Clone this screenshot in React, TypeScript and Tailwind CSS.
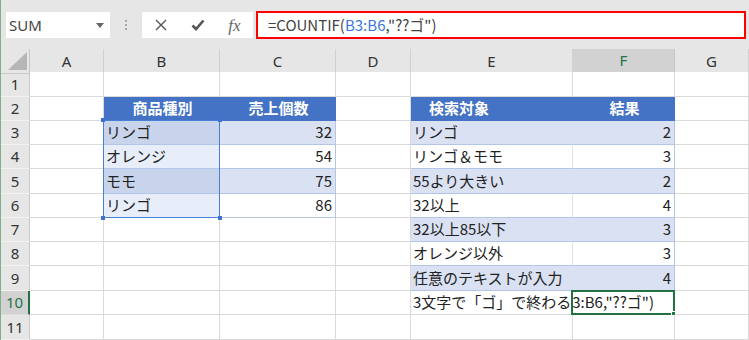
import { ReactNode } from 'react'

const font = "font-['Noto_Sans','Noto_Sans_CJK_JP',sans-serif]"
const cjk = "font-['Noto_Sans_CJK_JP',sans-serif]"

const cols = ['A', 'B', 'C', 'D', 'E', 'F', 'G']
const rowHeights = ['h-[25px]', 'h-[24px]', 'h-[24px]', 'h-[24px]', 'h-[25px]', 'h-[24px]', 'h-[24px]', 'h-[24px]', 'h-[25px]', 'h-[24px]', 'h-[25px]']

const grid = 'grid grid-cols-[29px_74px_116px_116px_75px_162px_102px_74px]'

// cell styles
const plain = 'bg-white border-r border-b border-[#dadada]'
const head = 'bg-[#4472c4] border-r border-b border-[#4472c4] text-white font-bold justify-center'
const bandL = 'bg-[#d9e1f2] border-r border-b border-[#d9e1f2] border-b-[#b4c6e7]'
const bandR = 'bg-[#d9e1f2] border-r border-b border-[#b4c6e7] justify-end pr-[3px]'
const whiteL = 'bg-white border-r border-b border-[#e1e1e1] border-b-[#b4c6e7]'
const whiteR = 'bg-white border-r border-b border-[#b4c6e7] justify-end pr-[3px]'
const selBand = 'bg-[#c8d4ec] border-r border-b border-[#c8d4ec] border-b-[#b4c6e7]'
const selWhite = 'bg-[#e8eef9] border-r border-b border-[#e8eef9] border-b-[#b4c6e7]'

type C = { t?: ReactNode; c?: string }

const leftTable: [C, C][] = [
  [{ t: '商品種別', c: head }, { t: '売上個数', c: head }],
  [{ t: 'リンゴ', c: selBand }, { t: '32', c: bandR }],
  [{ t: 'オレンジ', c: selWhite }, { t: '54', c: whiteR }],
  [{ t: 'モモ', c: selBand }, { t: '75', c: bandR }],
  [{ t: 'リンゴ', c: selWhite }, { t: '86', c: whiteR }],
]

const rightTable: [C, C][] = [
  [{ t: '検索対象', c: head + ' !justify-start pl-[18px]' }, { t: '結果', c: head }],
  [{ t: 'リンゴ', c: bandL }, { t: '2', c: bandR }],
  [{ t: 'リンゴ＆モモ', c: whiteL }, { t: '3', c: whiteR }],
  [{ t: '55より大きい', c: bandL }, { t: '2', c: bandR }],
  [{ t: '32以上', c: whiteL }, { t: '4', c: whiteR }],
  [{ t: '32以上85以下', c: bandL }, { t: '3', c: bandR }],
  [{ t: 'オレンジ以外', c: whiteL }, { t: '3', c: whiteR }],
  [{ t: '任意のテキストが入力', c: bandL }, { t: '4', c: bandR }],
  [
    { t: '3文字で「ゴ」で終わる', c: plain },
    {
      t: <span className="whitespace-nowrap">=COUNTIF(B3:B6,"??ゴ")</span>,
      c: 'relative z-10 bg-white border-r border-b border-[#dadada] overflow-hidden justify-end pr-[20px]',
    },
  ],
]

function rowCells(r: number): C[] {
  const cells: C[] = Array.from({ length: 7 }, () => ({ c: plain }))
  if (r >= 2 && r <= 6) {
    const [b, c] = leftTable[r - 2]
    cells[1] = b
    cells[2] = c
  }
  if (r >= 2 && r <= 10) {
    const [e, f] = rightTable[r - 2]
    cells[4] = e
    cells[5] = f
  }
  return cells
}

function Handle({ className }: { className: string }) {
  return <div className={`absolute w-[4px] h-[4px] bg-[#3f72cf] ${className}`} />
}

export default function App() {
  return (
    <div className={`w-[749px] h-[340px] overflow-hidden bg-[#e6e6e6] border-l border-[#7fb08e] ${font}`}>
      {/* Formula bar */}
      <div className="h-[49px] flex items-center pt-[1px]">
        <div className="ml-[5px] w-[104px] h-[26px] bg-white flex items-center justify-between pl-[3px] pr-[6px]">
          <span className="text-[15px] text-[#444]">SUM</span>
          <svg width="8" height="5" viewBox="0 0 8 5">
            <path d="M0 0h8L4 5z" fill="#666" />
          </svg>
        </div>
        <div className="w-[32px] flex flex-col items-center gap-[2px]">
          <span className="w-[2px] h-[2px] bg-[#a8a8a8]" />
          <span className="w-[2px] h-[2px] bg-[#a8a8a8]" />
          <span className="w-[2px] h-[2px] bg-[#a8a8a8]" />
        </div>
        <div className="w-[111px] h-[26px] bg-white flex items-center">
          <div className="w-[37px] flex justify-center">
            <svg width="12" height="12" viewBox="0 0 12 12">
              <path d="M1 1l10 10M11 1L1 11" stroke="#555" strokeWidth="1.4" />
            </svg>
          </div>
          <div className="w-[37px] flex justify-center">
            <svg width="14" height="12" viewBox="0 0 14 12">
              <path d="M1.5 6.5l3.5 3.5 7.5-8.5" stroke="#555" strokeWidth="2.6" fill="none" />
            </svg>
          </div>
          <div className="w-[37px] flex justify-center">
            <span className="font-['Liberation_Serif',serif] italic text-[17px] text-[#666] leading-none">fx</span>
          </div>
        </div>
        <div className="ml-[3px] w-[490px] h-[28px] bg-white border-2 border-[#ff0000] flex items-center pl-[10px]">
          <span className={`${cjk} text-[15px] text-[#444] whitespace-nowrap`}>
            =COUNTIF(<span className="text-[#3a78d8]">B3:B6</span>,"??ゴ")
          </span>
        </div>
      </div>

      {/* Column headers */}
      <div className={`${grid} h-[23px]`}>
        <div className="relative border-r border-b border-[#c8c8c8]">
          <svg className="absolute left-0 top-0" width="29" height="23" viewBox="0 0 29 23">
            <path d="M7 21h19V3z" fill="#b6b6b6" />
          </svg>
        </div>
        {cols.map((c) =>
          c === 'F' ? (
            <div key={c} className="bg-[#d2d2d2] border-r border-[#c8c8c8] border-b-2 border-b-[#217346] flex items-center justify-center text-[15px] text-[#217346]">
              {c}
            </div>
          ) : (
            <div key={c} className="border-r border-b border-[#d0d0d0] border-b-[#c8c8c8] flex items-center justify-center text-[15px] text-[#333]">
              {c}
            </div>
          )
        )}
      </div>

      {/* Rows */}
      <div className="relative">
        {rowHeights.map((h, i) => {
          const r = i + 1
          return (
            <div key={r} className={`${grid} ${h}`}>
              {r === 10 ? (
                <div className="bg-[#d2d2d2] border-r-2 border-r-[#217346] border-b border-b-[#dcdcdc] flex items-center justify-center text-[15px] text-[#217346]">
                  {r}
                </div>
              ) : (
                <div className="border-r border-[#c8c8c8] border-b border-b-[#f2f2f2] flex items-center justify-center text-[15px] text-[#333]">
                  {r}
                </div>
              )}
              {rowCells(r).map((cell, j) => (
                <div
                  key={j}
                  className={`flex items-center pl-[2px] whitespace-nowrap text-[15px] text-[#222] ${cjk} ${cell.c}`}
                >
                  {cell.t}
                </div>
              ))}
            </div>
          )
        })}

        {/* selection B3:B6 */}
        <div className="absolute left-[102px] top-[48px] w-[117px] h-[98px] border border-[#4a7fd6] pointer-events-none">
          <Handle className="-left-[3px] -top-[3px]" />
          <Handle className="-right-[3px] -top-[3px]" />
          <Handle className="-left-[3px] -bottom-[3px]" />
          <Handle className="-right-[3px] -bottom-[3px]" />
        </div>

        {/* active cell F10 */}
        <div className="absolute left-[570px] top-[218px] w-[104px] h-[25px] border-2 border-[#217346] z-20 pointer-events-none">
          <div className="absolute -right-[3px] -bottom-[3px] w-[5px] h-[5px] bg-[#217346] border border-white" />
        </div>
      </div>
    </div>
  )
}
